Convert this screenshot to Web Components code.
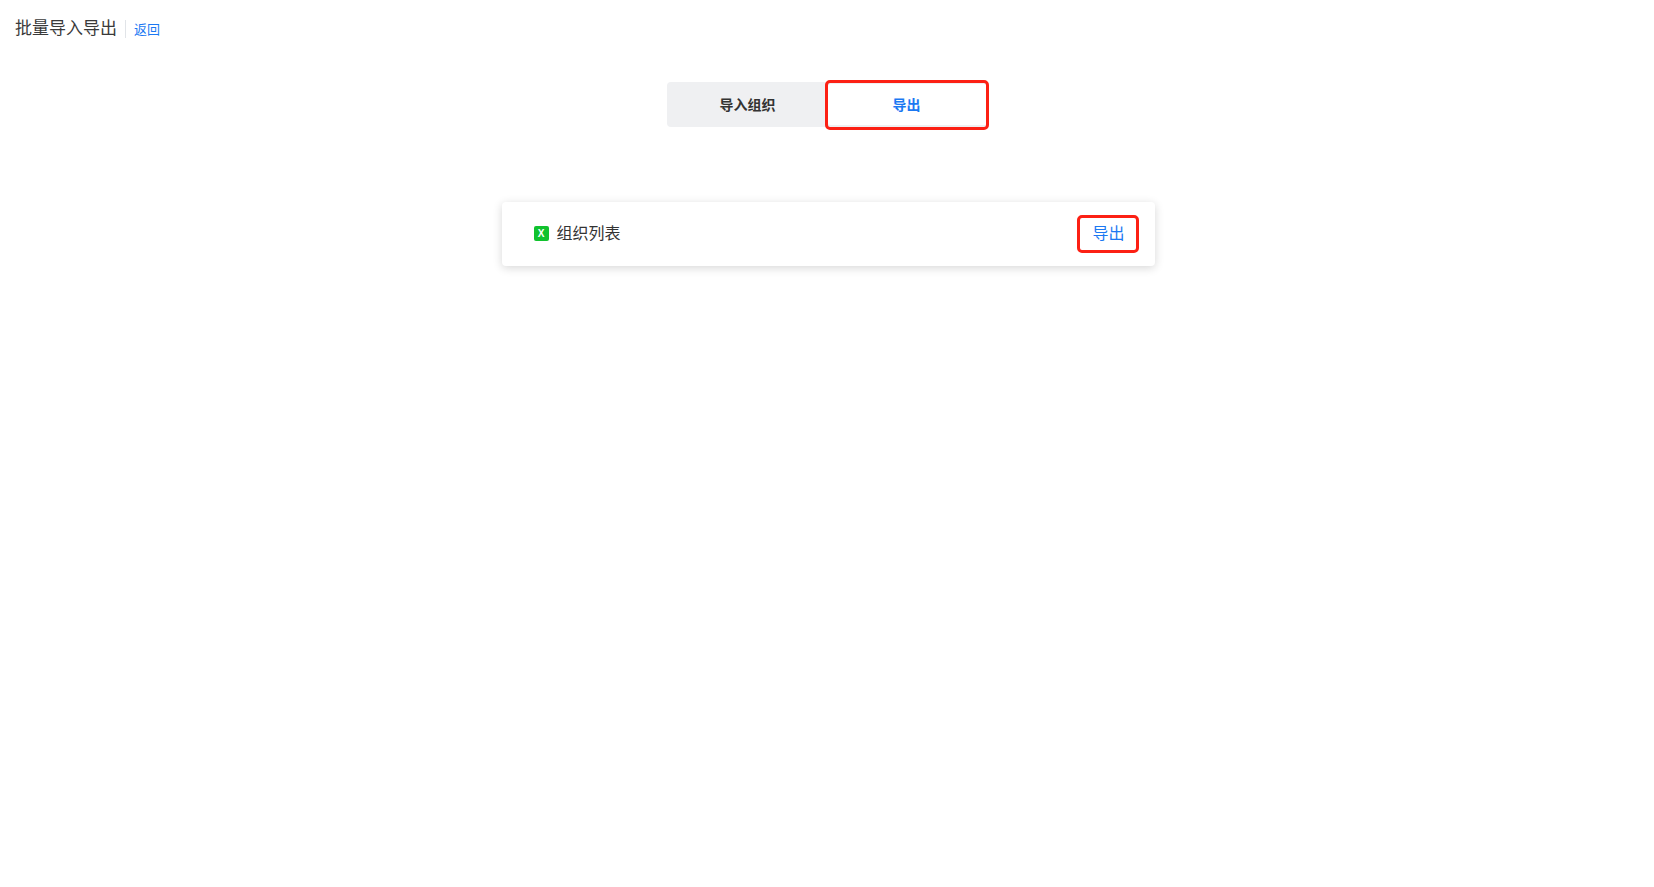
<!DOCTYPE html>
<html lang="zh">
<head>
<meta charset="utf-8">
<title>批量导入导出</title>
<style>
  html, body { margin: 0; background: #fff; }
  body { font-family: "Noto Sans CJK SC", "Noto Sans", sans-serif; color: #333; min-height: 100vh; }
  main { display: block; padding-left: 2px; padding-bottom: 40px; }
</style>
</head>
<body>
<page-header title="批量导入导出" back="返回"></page-header>
<main>
  <tab-switch first="导入组织" second="导出"></tab-switch>
  <export-card label="组织列表" action="导出"></export-card>
</main>
<script>
class PageHeader extends HTMLElement {
  constructor() {
    super();
    this.attachShadow({ mode: "open" });
  }

  connectedCallback() {
    const title = this.getAttribute("title") || "";
    const back = this.getAttribute("back") || "";

    this.shadowRoot.innerHTML = `
      <style>
        :host {
          display: flex;
          align-items: center;
          height: 58px;
          padding-left: 15px;
        }
        h1 {
          margin: 0;
          padding-bottom: 5px;
          font-size: 17px;
          font-weight: 400;
          color: #3a3a3a;
        }
        .divider {
          width: 1px;
          height: 18px;
          margin: 0 8px;
          background: #e1e4e8;
        }
        a {
          padding-bottom: 2px;
          font-size: 13px;
          color: #1b78f2;
          text-decoration: none;
        }
      </style>
      <h1>${title}</h1>
      <span class="divider"></span>
      <a href="#">${back}</a>
    `;
  }
}

class TabSwitch extends HTMLElement {
  constructor() {
    super();
    this.attachShadow({ mode: "open" });
  }

  connectedCallback() {
    const first = this.getAttribute("first") || "";
    const second = this.getAttribute("second") || "";

    this.shadowRoot.innerHTML = `
      <style>
        :host {
          display: flex;
          justify-content: center;
          margin-top: 24px;
        }
        .tabs {
          display: grid;
          grid-template-columns: 159px 159px;
          height: 45px;
          box-sizing: border-box;
          padding: 2px;
          border-radius: 4px;
          background: #eff0f2;
          position: relative;
        }
        .tab {
          display: flex;
          align-items: center;
          justify-content: center;
          padding: 0 2px 2px 0;
          font-size: 14px;
          font-weight: 700;
          color: #333;
          border-radius: 3px;
        }
        .tab.active {
          background: #fff;
          color: #1b78f2;
        }
        .mark {
          position: absolute;
          left: 158px;
          top: -2px;
          width: 164px;
          height: 50px;
          box-sizing: border-box;
          border: 3px solid #fc2014;
          border-radius: 5px;
        }
      </style>
      <div class="tabs">
        <div class="tab">${first}</div>
        <div class="tab active">${second}</div>
        <div class="mark"></div>
      </div>
    `;
  }
}

class ExportCard extends HTMLElement {
  constructor() {
    super();
    this.attachShadow({ mode: "open" });
  }

  connectedCallback() {
    const label = this.getAttribute("label") || "";
    const action = this.getAttribute("action") || "";

    this.shadowRoot.innerHTML = `
      <style>
        :host {
          display: flex;
          align-items: center;
          box-sizing: border-box;
          width: 653px;
          height: 64px;
          margin: 75px auto 0;
          padding: 0 16px 0 32px;
          border-radius: 4px;
          background: #fff;
          box-shadow: 0 2px 10px rgba(0, 0, 0, 0.16);
        }
        .icon {
          flex: none;
          display: flex;
          align-items: center;
          justify-content: center;
          width: 15px;
          height: 15px;
          margin: 0 8px 2px 0;
          border-radius: 2px;
          background: #11c22e;
          color: #fff;
          font: 700 10px/15px "Liberation Sans", sans-serif;
        }
        .label {
          flex: 1;
          padding-bottom: 4px;
          font-size: 16px;
          color: #333;
        }
        .action {
          display: flex;
          align-items: center;
          justify-content: center;
          box-sizing: border-box;
          width: 62px;
          height: 38px;
          padding: 0 0 4px 2px;
          font-size: 16px;
          color: #1b78f2;
          border: 3px solid #fc2014;
          border-radius: 5px;
        }
      </style>
      <span class="icon">X</span>
      <span class="label">${label}</span>
      <span class="action">${action}</span>
    `;
  }
}

// Register custom elements
customElements.define("page-header", PageHeader);
customElements.define("tab-switch", TabSwitch);
customElements.define("export-card", ExportCard);
</script>
</body>
</html>
